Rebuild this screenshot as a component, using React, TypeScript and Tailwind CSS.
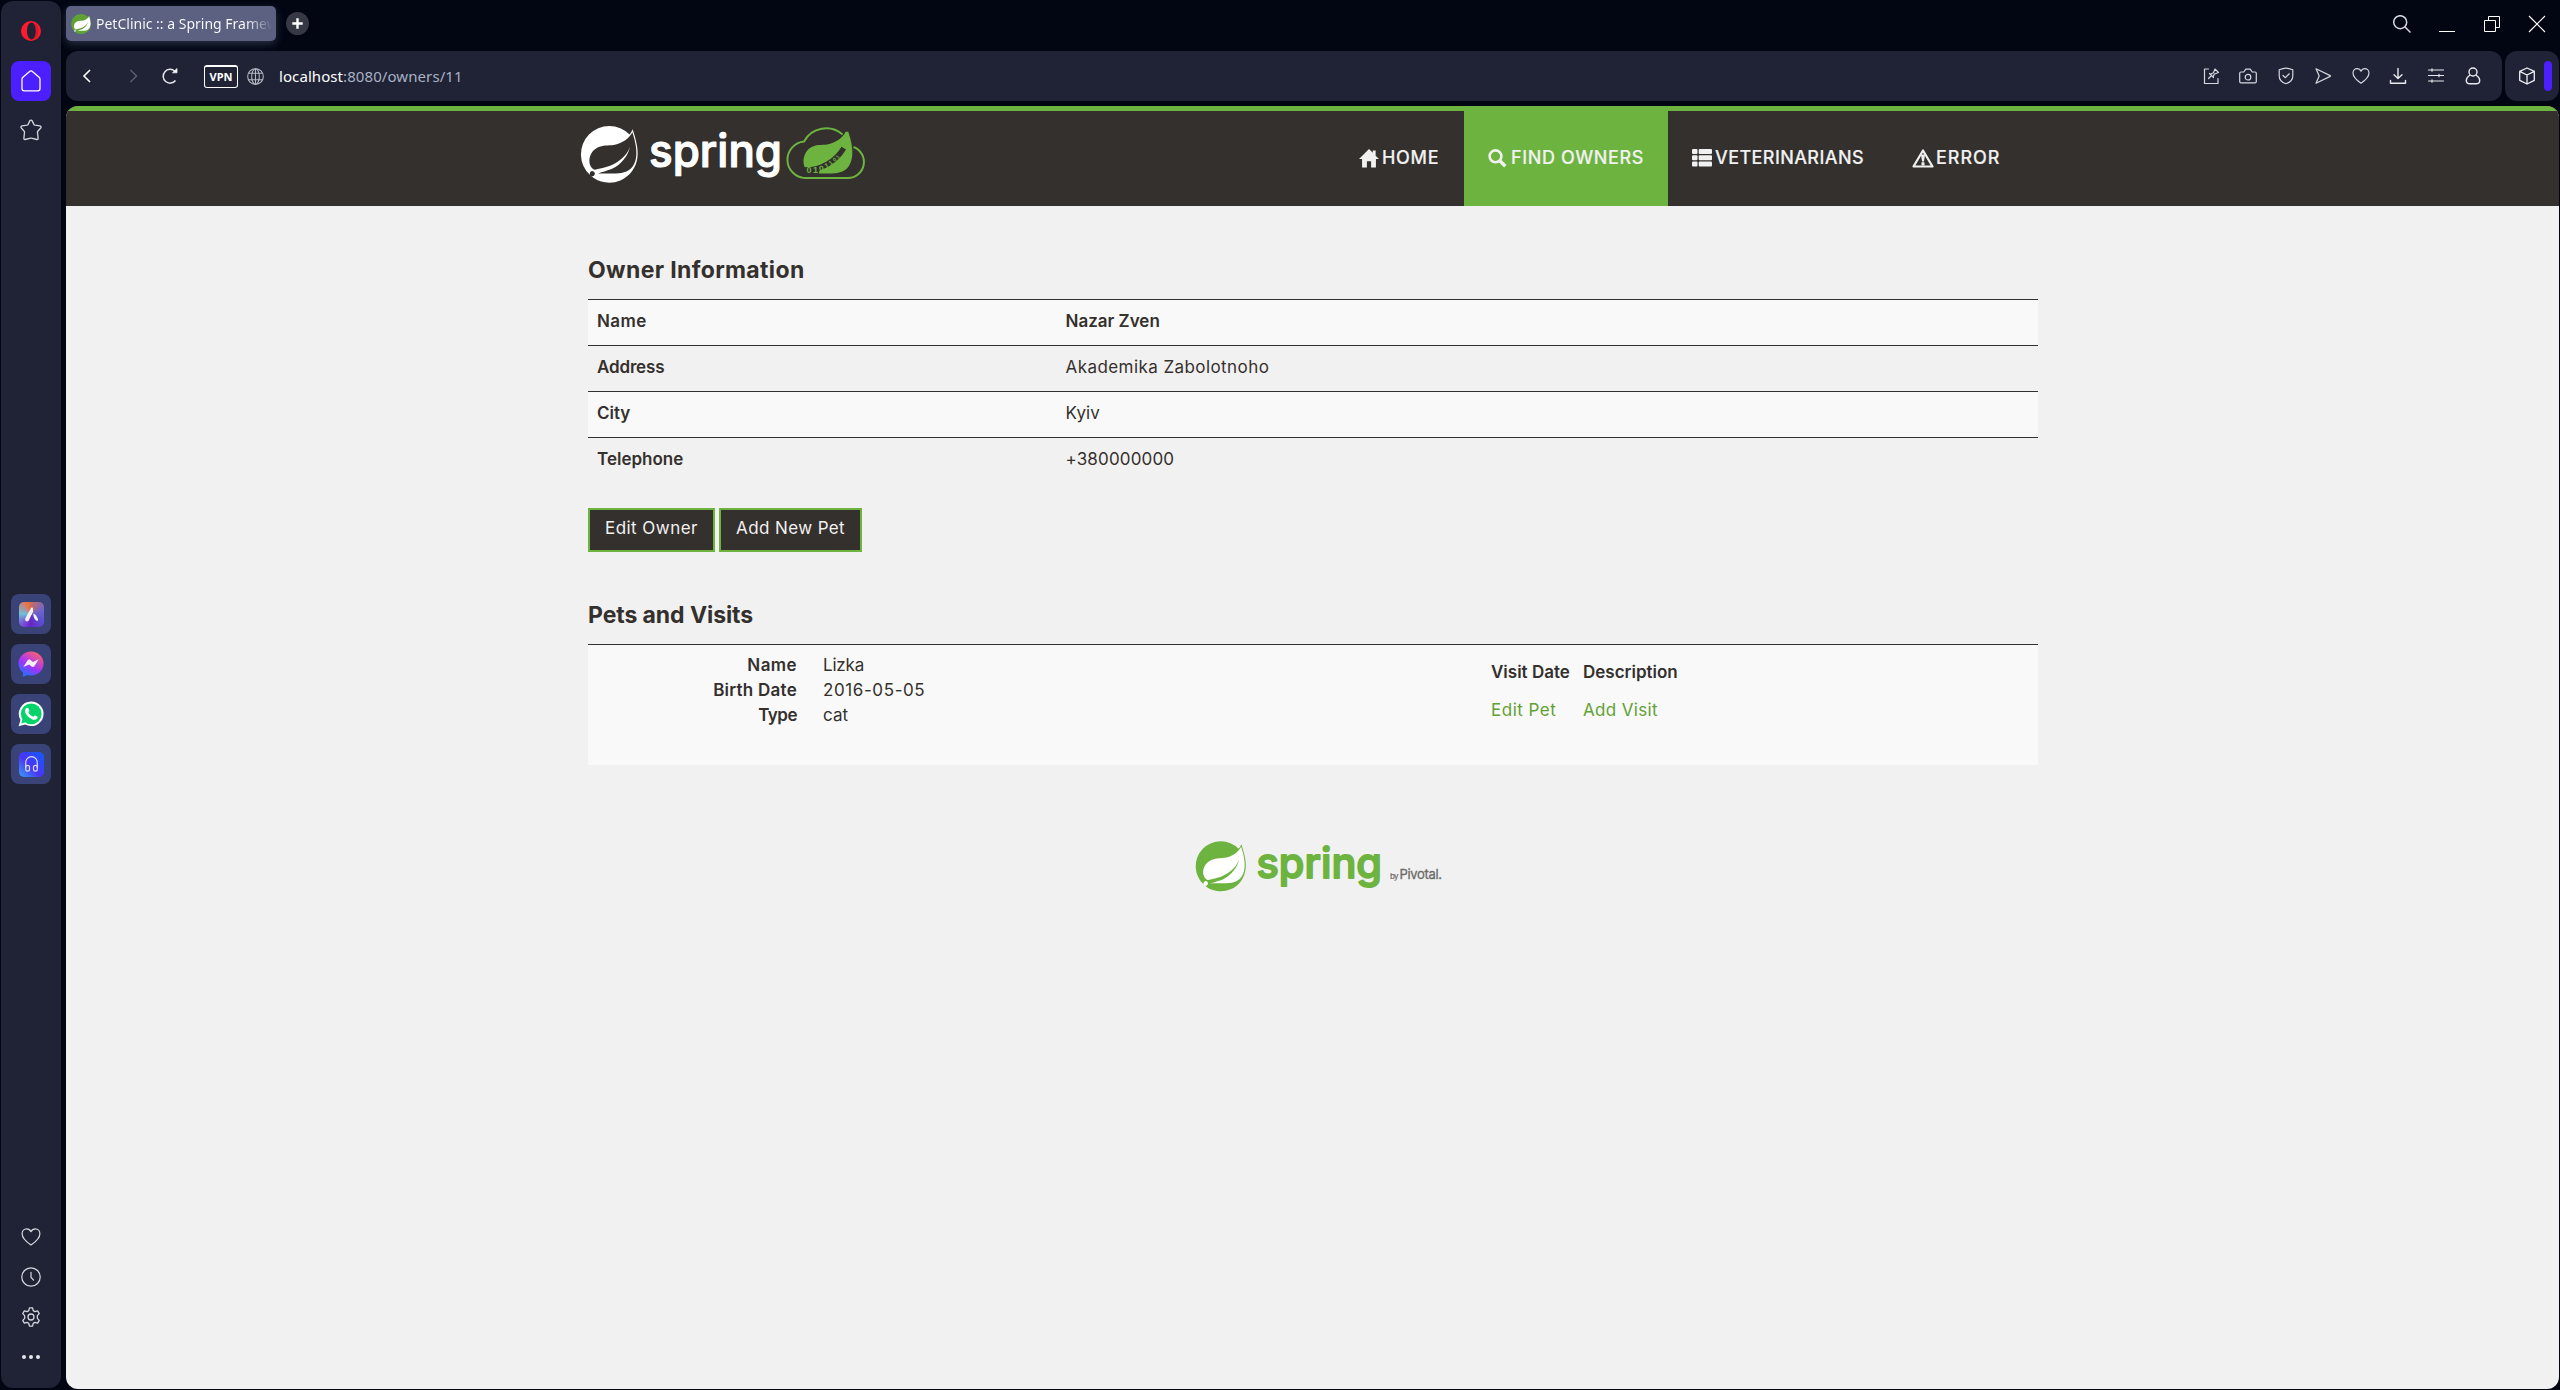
import type { ReactNode } from "react";

const LEAF =
  "M21.7796 17.2939c-2.9385 3.9263-9.2601 2.5928-13.2852 2.7904 0 0-.7161.0494-1.4323.1481 0 0 .2717-.1234.6174-.2469 2.8398-.9877 4.1732-1.1853 5.9018-2.0743 3.2349-1.6545 6.4698-5.2844 7.1118-9.0379-1.2347 3.6053-4.9881 6.7167-8.3959 7.9761-2.3459.8643-6.5685 1.7039-6.5685 1.7039l-.1729-.0988c-2.8645-1.4076-2.9632-7.6304 2.2718-9.6306 2.2966-.889 4.4696-.395 6.9637-.9877 2.6422-.6174 5.7045-2.5929 6.939-5.1857 1.3828 4.1732 3.062 10.643.0493 14.6434z";
const DISC =
  "M21.8537 1.4158a10.4504 10.4504 0 0 1-1.284 2.2471A11.9666 11.9666 0 1 0 3.8518 20.7757l.4445.3951a11.9543 11.9543 0 0 0 19.6316-8.2971c.3457-3.0126-.568-6.8649-2.0742-11.458zM5.5805 20.8745a1.0174 1.0174 0 1 1-.1482-1.4323 1.0396 1.0396 0 0 1 .1482 1.4323z";

function SpringMark({ disc, leaf }: { disc: string; leaf: string }) {
  return (
    <>
      <path d={DISC} fill={disc} />
      <path d={LEAF} fill={leaf} />
      <circle cx="4.8" cy="20.2" r="1.02" fill={leaf} />
    </>
  );
}

function HeaderLogo() {
  return (
    <svg className="mt-[9px] h-[66px] w-[290px] shrink-0 overflow-visible" viewBox="0 0 290 66">
      <g transform="translate(.9 5.9) scale(2.367)">
        <SpringMark disc="#fff" leaf="#34302d" />
      </g>
      <text
        x="69"
        y="46.5"
        textLength="133"
        lengthAdjust="spacingAndGlyphs"
        className="font-['Inter'] text-[45px] font-medium"
        fill="#fff"
        stroke="#fff"
        strokeWidth="1.2"
        strokeLinejoin="round"
      >
        spring
      </text>
      <path
        d="M262.5 14.5A25 25 0 0 0 224 21.5A18.3 18.3 0 0 0 225 58H268A16 16 0 0 0 273.5 27"
        fill="none"
        stroke="#6db33f"
        strokeWidth="2"
      />
      <g transform="translate(216.9 5.9) scale(2.367)">
        <path
          d="M21.7796 17.2939c-2.9385 3.9263-9.2601 2.5928-13.2852 2.7904L5 20C1 16 3 10 6.7 8.6682c2.2966-.889 4.4696-.395 6.9637-.9877 2.6422-.6174 5.7045-2.5929 6.939-5.1857l1.1 0c1.3828 4.1732 3.062 10.643.0769 14.7991z"
          fill="#6db33f"
        />
        <path d="M2.6 18.2C10 17.6 16.5 15 20.4 8.4" fill="none" stroke="#34302d" strokeWidth="2.2" transform="translate(-.6 1)" />
        <path d="M3 17.5L10 17.2L9 21.4L2.5 21.6z" fill="#34302d" />
      </g>
      <g className="font-['Liberation_Sans'] font-bold" fill="#6db33f">
        <text x="226.5" y="53" fontSize="9">0</text>
        <text x="233" y="52.5" fontSize="9">1</text>
        <text x="239.5" y="52" fontSize="8.5" transform="rotate(-12 240 51)">0</text>
        <text x="246" y="49" fontSize="7.5" transform="rotate(-25 246 49)">1</text>
        <text x="250.5" y="46" fontSize="6.5" transform="rotate(-35 250 46)">1</text>
        <text x="254.5" y="42.5" fontSize="5.5" transform="rotate(-42 254 42)">0</text>
        <text x="258" y="39" fontSize="5" transform="rotate(-48 258 39)">1</text>
      </g>
    </svg>
  );
}

function FooterLogo() {
  return (
    <svg className="h-[56px] w-[252px] overflow-visible" viewBox="0 0 252 56">
      <g transform="translate(.7 3.2) scale(2.09)">
        <SpringMark disc="#6db33f" leaf="#fff" />
      </g>
      <text
        x="61.5"
        y="40"
        textLength="125.5"
        lengthAdjust="spacingAndGlyphs"
        className="font-['Inter'] text-[42px] font-medium"
        fill="#6db33f"
        stroke="#6db33f"
        strokeWidth="1.8"
        strokeLinejoin="round"
      >
        spring
      </text>
      <text x="195" y="41" textLength="8.5" className="font-['Inter'] text-[8px]" fill="#6c6a68" stroke="#6c6a68" strokeWidth=".2">
        by
      </text>
      <text x="204.5" y="41" textLength="42.5" className="font-['Inter'] text-[13px]" fill="#6c6a68" stroke="#6c6a68" strokeWidth=".3">
        Pivotal.
      </text>
    </svg>
  );
}

function Line({ children, size = 18, w = 1.2, color = "#d5d7df" }: { children: ReactNode; size?: number; w?: number; color?: string }) {
  return (
    <svg width={size} height={size} viewBox="0 0 18 18" fill="none" stroke={color} strokeWidth={w} strokeLinecap="round" strokeLinejoin="round">
      {children}
    </svg>
  );
}

const HEART = "M9 16.2C5.5 13.8 1 10.2 1 6C1 3.4 2.9 1.6 5.1 1.6C6.9 1.6 8.3 2.6 9 4.2C9.7 2.6 11.1 1.6 12.9 1.6C15.1 1.6 17 3.4 17 6C17 10.2 12.5 13.8 9 16.2z";

function Sidebar() {
  const tile = "flex h-10 w-10 items-center justify-center rounded-lg bg-[#3a4377]";
  const small = "flex h-10 items-center justify-center pr-px";
  return (
    <aside className="ml-px mt-px flex h-[1387px] w-[60px] shrink-0 flex-col items-center rounded-xl bg-[#1f2335]">
      <div className="flex h-[60px] items-center">
        <svg width="20" height="20" viewBox="0 0 20 20">
          <path fillRule="evenodd" fill="#ff1b2d" d="M10 0a10 10 0 1 0 0 20a10 10 0 1 0 0-20zM10.500 1.500c2.600 0 4.300 3.800 4.300 8.500s-1.700 8.500-4.300 8.500s-4.500-3.800-4.500-8.500s1.900-8.500 4.500-8.500z" />
          <path fill="#b5121f" d="M11 1.500C14 2 15 6 15 10s-1 8-4 8.500C15 19 17.500 15 17.500 10S15 1 11 1.500z" opacity=".45" />
        </svg>
      </div>
      <div className="flex h-10 w-10 items-center justify-center rounded-lg bg-[#4b1fff]">
        <svg width="20" height="22" viewBox="0 0 20 22" fill="none" stroke="#fff" strokeWidth="1.3" strokeLinejoin="round">
          <path d="M1 9.200C1 8.400 1.300 7.700 1.900 7.200L8.300 1.700C9.300 .8 10.700 .8 11.700 1.700L18.100 7.200C18.700 7.700 19 8.400 19 9.200V18.500A2.300 2.300 0 0 1 16.700 20.800H3.300A2.300 2.300 0 0 1 1 18.500z" />
        </svg>
      </div>
      <div className="flex h-[58px] items-center pr-px">
        <svg width="22" height="22" viewBox="0 0 22 22" fill="none" stroke="#d5d7df" strokeWidth="1.300" strokeLinejoin="round">
          <path d="M9.800 1.900C10.300 .9 11.700 .9 12.200 1.900L14 5.600C14.200 5.900 14.500 6.100 14.900 6.200L20 6.900C21 7.100 21.400 8.200 20.700 9L17.800 12.200C17.500 12.500 17.400 12.900 17.500 13.300L18.100 19.300C18.200 20.200 17.600 20.700 16.800 20.500L11.500 19.200C11.200 19.100 10.800 19.100 10.500 19.200L5.200 20.500C4.400 20.700 3.800 20.200 3.900 19.300L4.500 13.300C4.600 12.900 4.500 12.500 4.200 12.200L1.300 9C.6 8.200 1 7.100 2 6.900L7.100 6.200C7.500 6.100 7.800 5.900 8 5.600z" />
        </svg>
      </div>
      <div className="mt-[435px] flex flex-col gap-2.5">
        <div className={tile}>
          <div className="flex h-[25px] w-[25px] items-center justify-center rounded-[5px] bg-[conic-gradient(from_0deg_at_50%_50%,#c96a62,#7065c8_18%,#5a4fd0_35%,#6a22c8_52%,#7a5fd8_64%,#6fc0d8_76%,#b98a8a_88%,#f0713a_94%,#c96a62)]">
            <svg width="15" height="15" viewBox="0 0 15 15" fill="#f4f1f5">
              <path d="M7.200 .8C7.900 0 9 .5 9 1.500V5L4.800 13.300C4.300 14.600 2.500 14.800 1.700 13.800C.8 12.900 1 12 1.500 11z" />
              <path d="M9.400 6.800C10.300 7.200 11.200 7.500 12 8.300L14 12C14.500 13.300 13.500 14.200 12.500 13.700C10.500 12.800 9.300 9.800 9.400 6.800z" />
            </svg>
          </div>
        </div>
        <div className={tile}>
          <svg width="26" height="26" viewBox="0 0 26 26">
            <defs>
              <linearGradient id="msg" x1=".15" y1="1" x2=".75" y2="0">
                <stop offset="0" stopColor="#0a7cff" />
                <stop offset=".45" stopColor="#a033ff" />
                <stop offset="1" stopColor="#ff6070" />
              </linearGradient>
            </defs>
            <path d="M13 .5C20 .5 25.500 5.600 25.500 12.500S20 24.500 13 24.500c-1.200 0-2.400-.2-3.500-.5L5 25.700V21.500C2.200 19.300 .5 16.200 .5 12.500C.5 5.600 6 .5 13 .5z" fill="url(#msg)" />
            <path d="M5.300 16L9.500 9.400C10.200 8.400 11.500 8.200 12.400 8.900L15 11L20.700 8.300L16.500 15C15.800 16 14.500 16.300 13.600 15.600L11 13.500z" fill="#f4f0fa" />
          </svg>
        </div>
        <div className={tile}>
          <svg width="26" height="26" viewBox="0 0 26 26">
            <path d="M13.200 .5a12.300 12.300 0 1 1-6 23L.6 25.300L2.500 19A12.300 12.300 0 0 1 13.200 .5z" fill="#fff" />
            <circle cx="13.200" cy="12.800" r="10.400" fill="#06d46a" />
            <path d="M3.300 22.600L4.400 18L8 21.300z" fill="#06d46a" />
            <path d="M8.800 6.800C9.600 6.500 10.100 6.700 10.400 7.300L11.300 9.500C11.500 10.100 10.700 10.900 10.400 11.300C11.500 13.500 13 14.800 15.200 15.700C15.800 15.300 16.300 14.200 17 14.400L19.300 15.500C19.900 15.900 19.500 17.300 19 17.800C17.700 19.100 15.900 19 14.400 18.400C11.400 17.300 9.200 15.200 7.600 12.300C6.500 10.100 7 7.800 8.800 6.800z" fill="#fff" />
          </svg>
        </div>
        <div className={tile}>
          <div className="flex h-[25px] w-[25px] items-center justify-center rounded-[5px] bg-[linear-gradient(45deg,#3aa0f5,#4a35f5_45%,#0f5cff)]">
            <svg width="13" height="16" viewBox="0 0 13 16" fill="none" stroke="#dcd8fb" strokeWidth="1.200">
              <path d="M.7 12V6.500a5.800 5.800 0 0 1 11.600 0V12" />
              <rect x=".7" y="9.300" width="3.800" height="5.800" rx="1.900" />
              <rect x="8.500" y="9.300" width="3.800" height="5.800" rx="1.900" />
            </svg>
          </div>
        </div>
      </div>
      <div className="mt-[433px] flex flex-col">
        <div className={small}>
          <Line size={20} w={1.1}><path d={HEART} /></Line>
        </div>
        <div className={small}>
          <Line size={20} w={1.1}><circle cx="9" cy="9" r="8.300" /><path d="M9 4.800V9.200L11.300 11.800" /></Line>
        </div>
        <div className={small}>
          <Line size={20} w={1.150}>
            <path d="M7.600 .8H10.400L11 3.300L12.500 4.200L15 3.500L16.400 5.900L14.700 7.800V10.200L16.400 12.100L15 14.500L12.500 13.800L11 14.700L10.400 17.200H7.600L7 14.700L5.500 13.800L3 14.500L1.600 12.100L3.300 10.200V7.800L1.600 5.900L3 3.500L5.500 4.200L7 3.300z" />
            <circle cx="9" cy="9" r="2.700" />
          </Line>
        </div>
        <div className={small}>
          <svg width="18" height="4" viewBox="0 0 18 4" fill="#e4e5ea">
            <circle cx="2" cy="2" r="2" /><circle cx="9" cy="2" r="2" /><circle cx="16" cy="2" r="2" />
          </svg>
        </div>
      </div>
    </aside>
  );
}

function TabBar() {
  const cell = "flex w-[45px] justify-center";
  return (
    <div className="flex h-[51px] items-start">
      <div className="mt-1.5 flex h-[35px] w-[210px] items-center overflow-hidden rounded-[5px] bg-[#5c6182] pl-[5px] shadow-[0_3px_8px_rgba(92,97,130,0.45)]">
        <svg width="20" height="20" viewBox="0 0 24 24" className="shrink-0">
          <SpringMark disc="#5fa134" leaf="#fff" />
        </svg>
        <span className="ml-[5px] mr-1 flex-1 overflow-hidden whitespace-nowrap bg-[linear-gradient(to_right,#fff_85%,#5c6182)] bg-clip-text font-['Noto_Sans',sans-serif] text-[14px] text-transparent">
          PetClinic :: a Spring Framew
        </span>
      </div>
      <div className="ml-2.5 mt-3 flex h-[23px] w-[23px] items-center justify-center rounded-full bg-[#363843]">
        <svg width="11" height="11" viewBox="0 0 11 11" stroke="#fff" strokeWidth="2.400"><path d="M5.500 .3V10.700M.3 5.500H10.700" /></svg>
      </div>
      <div className="ml-auto mt-[15px] flex h-[18px] items-center pr-px">
        <span className={cell}>
          <svg width="18" height="18" viewBox="0 0 18 18" fill="none" stroke="#d5d7df" strokeWidth="1.500"><circle cx="7.200" cy="7.200" r="6.500" /><path d="M11.800 11.800L17.500 17.500" /></svg>
        </span>
        <span className={cell}>
          <svg width="16" height="18" viewBox="0 0 16 18" stroke="#fff"><path d="M0 16.500H16" /></svg>
        </span>
        <span className={cell}>
          <svg width="16" height="18" viewBox="0 0 16 18" fill="none" stroke="#fff"><path d="M.5 5.500H11.500V16.500H.5z M4.500 5V1.500H15.500V12.500H12" /></svg>
        </span>
        <span className={cell}>
          <svg width="18" height="18" viewBox="0 0 18 18" stroke="#fff" strokeWidth="1.200"><path d="M1 1L17 17M17 1L1 17" /></svg>
        </span>
      </div>
    </div>
  );
}

function AddressBar() {
  const cell = "flex w-[37.5px] justify-center";
  return (
    <div className="flex h-[50px] gap-[3px]">
      <div className="flex flex-1 items-center rounded-xl bg-[#1f2335] pl-4 pr-[10px]">
        <svg width="10" height="14" viewBox="0 0 10 14" fill="none" stroke="#fff" strokeWidth="1.600"><path d="M8 1L2 7L8 13" /></svg>
        <svg className="ml-[37px]" width="10" height="14" viewBox="0 0 10 14" fill="none" stroke="#5a5d6c" strokeWidth="1.500"><path d="M1.500 1L7.500 7L1.500 13" /></svg>
        <svg className="ml-[22px]" width="18" height="18" viewBox="0 0 18 18" fill="none" stroke="#e6e7ec" strokeWidth="1.500">
          <path d="M14.500 13.500A6.900 6.900 0 1 1 13.800 4.200" /><path d="M11.500 5.800H16V1.500z" fill="#fff" strokeWidth=".8" />
        </svg>
        <div className="ml-[25px] flex h-[23px] w-[34px] items-center justify-center rounded-[3px] border border-t-2 border-white font-['Noto_Sans',sans-serif] text-[11px] font-bold leading-none text-white">
          VPN
        </div>
        <svg className="ml-[9px]" width="17" height="17" viewBox="0 0 17 17" fill="none" stroke="#b5b8c4" strokeWidth="1.100">
          <circle cx="8.500" cy="8.500" r="7.800" /><ellipse cx="8.500" cy="8.500" rx="3.800" ry="7.800" /><path d="M1.700 5.200H15.300M1.700 11.800H15.300M8.500 .7V16.300" />
        </svg>
        <span className="ml-[15px] font-['Noto_Sans',sans-serif] text-[15px] tracking-[0.08px] text-[#a9b0c4]">
          <span className="text-white">localhost</span>:8080/owners/11
        </span>
        <div className="ml-auto flex items-center">
          <span className={cell}>
            <Line><path d="M6.500 2H2.500V16.500H16V11.500" /><path d="M6.500 11.500L9 9M7.500 6.500L11.500 10.500M8.500 7.300L11.500 5.800L13 2L16.500 5.500L12.500 7L11 9.800" /></Line>
          </span>
          <span className={cell}>
            <Line><path d="M2 5H4.800L6.800 2.200H11.200L13.200 5H16A1.300 1.300 0 0 1 17.300 6.300V14.500A1.300 1.300 0 0 1 16 15.800H2A1.300 1.300 0 0 1 .7 14.500V6.300A1.300 1.300 0 0 1 2 5z" /><circle cx="9" cy="10.200" r="2.800" /></Line>
          </span>
          <span className={cell}>
            <Line><path d="M9 1.200C11.500 1.200 13.500 1.900 15.800 2.800V9C15.800 12.500 12.800 15.500 9 16.700C5.200 15.500 2.200 12.500 2.200 9V2.800C4.500 1.900 6.500 1.200 9 1.200z" /><path d="M6 8.500L8.200 10.700L12.300 6.800" /></Line>
          </span>
          <span className={cell}>
            <Line><path d="M2 1.800L16.200 8.600C16.600 8.800 16.600 9.200 16.200 9.400L2 16.200L5.200 9z" /></Line>
          </span>
          <span className={cell}>
            <Line><path d={HEART} /></Line>
          </span>
          <span className={cell}>
            <Line w={1.400} color="#e8e9ee"><path d="M9 1.500V11M5 7.800L9 11.500L13 7.800M1.500 13.500V16.300H16.500V13.500" /></Line>
          </span>
          <span className={cell}>
            <Line w={1.200} color="#e8e9ee"><path d="M1.500 3H16.500M1.500 8.500H16.500M1.500 14H16.500M5 1.800V4.200M12 7.300V9.700M5 12.800V15.200" /></Line>
          </span>
          <span className={cell}>
            <Line w={1.400} color="#e8e9ee"><circle cx="9" cy="5" r="4" /><path d="M5.500 8.500C3.500 9.700 2.300 11.500 2.300 13.500C2.300 15.700 3.800 16.800 6 16.800H12C14.200 16.800 15.700 15.700 15.700 13.500C15.700 11.500 14.500 9.700 12.500 8.500" /></Line>
          </span>
        </div>
      </div>
      <div className="mr-px flex w-[54px] items-center rounded-xl bg-[#1f2335] pl-[13px]">
        <Line w={1.300} color="#f0f0f4"><path d="M9 1L16.300 4.300V13.300L9 17L1.700 13.300V4.300zM1.700 4.300L9 8L16.300 4.300M9 8V17" /></Line>
        <div className="ml-2 h-[30px] w-2 rounded-full bg-[#4b1fff]" />
      </div>
    </div>
  );
}

function Nav() {
  const item = "flex h-[95px] items-center pl-6 pb-[1px] text-[18px] font-medium leading-none text-[#f1f1f1]";
  return (
    <nav className="flex font-['Inter',sans-serif]">
      <a className={item + " w-[129px]"}>
        <svg width="20" height="19" viewBox="0 0 21 20" fill="#f1f1f1"><path d="M10.500 0L14.500 4V1.500H17.500V7L21 10.600H17.800V19.500H12.700V13H8.300V19.500H3.200V10.600H0z" /></svg>
        <span className="ml-[3px] tracking-[0.7px] [-webkit-text-stroke:0.15px]">HOME</span>
      </a>
      <a className={item + " w-[204px] bg-[#6db33f]"}>
        <svg width="19" height="19" viewBox="0 0 19 19" fill="none" stroke="#f1f1f1"><circle cx="7.500" cy="7.300" r="5.900" strokeWidth="2.600" /><path d="M11.800 11.800L17.300 17.300" strokeWidth="3.400" /></svg>
        <span className="ml-1 tracking-[0.6px] [-webkit-text-stroke:0.15px]">FIND OWNERS</span>
      </a>
      <a className={item + " w-[220px]"}>
        <svg width="20" height="18" viewBox="0 0 20 18" fill="#f1f1f1">
          <rect width="5.500" height="5" rx="1" /><rect x="6.700" width="13.300" height="5" rx="1" />
          <rect y="6.300" width="5.500" height="5" rx="1" /><rect x="6.700" y="6.300" width="13.300" height="5" rx="1" />
          <rect y="12.600" width="5.500" height="5" rx="1" /><rect x="6.700" y="12.600" width="13.300" height="5" rx="1" />
        </svg>
        <span className="ml-[3px] tracking-[0.4px] [-webkit-text-stroke:0.15px]">VETERINARIANS</span>
      </a>
      <a className={item + " w-[137px]"}>
        <svg width="22" height="19" viewBox="0 0 22 19">
          <path d="M11 1.500L20.500 17.500H1.500z" fill="none" stroke="#f1f1f1" strokeWidth="2.200" strokeLinejoin="round" />
          <path d="M9 5.500H13L12 12.500H10z M9.500 13.300H12.500V16.500H9.500z" fill="#f1f1f1" />
        </svg>
        <span className="ml-[2px] tracking-[0.95px] [-webkit-text-stroke:0.15px]">ERROR</span>
      </a>
    </nav>
  );
}

const heading = "text-[23px] font-bold leading-[26px]";
const button = "block h-11 border-2 border-[#6db33f] bg-[#34302d] pl-[15px] pt-[5px] leading-[26px] text-[#f1f1f1]";

const ownerRows = [
  { label: "Name", labelClass: "tracking-[0.4px]", value: "Nazar Zven", valueClass: "font-semibold" },
  { label: "Address", labelClass: "tracking-[-0.15px]", value: "Akademika Zabolotnoho", valueClass: "tracking-[0.43px]" },
  { label: "City", labelClass: "", value: "Kyiv", valueClass: "tracking-[0.15px]" },
  { label: "Telephone", labelClass: "", value: "+380000000", valueClass: "tracking-[0.15px]" },
];

const petRows = [
  { label: "Name", labelClass: "tracking-[0.4px]", value: "Lizka", valueClass: "tracking-[-0.2px]" },
  { label: "Birth Date", labelClass: "tracking-[0.25px]", value: "2016-05-05", valueClass: "tracking-[0.6px]" },
  { label: "Type", labelClass: "tracking-[-0.5px]", value: "cat", valueClass: "" },
];

export default function App() {
  return (
    <div className="flex h-[1390px] w-[2560px] overflow-hidden bg-[#020613]">
      <Sidebar />
      <div className="ml-[5px] flex flex-1 flex-col">
        <TabBar />
        <AddressBar />
        <main className="mr-px mt-[5px] h-[1283px] overflow-hidden rounded-xl bg-[#f1f1f1] font-['Inter',sans-serif] text-[17px] text-[#34302d]">
          <header className="flex h-[100px] border-t-[5px] border-[#6db33f] bg-[#34302d] pl-[514px]">
            <HeaderLogo />
            <div className="ml-[465px]">
              <Nav />
            </div>
          </header>
          <div className="ml-[522px] flex w-[1450px] flex-col pt-[51px]">
            <h2 className={heading + " mb-4 tracking-[0.35px]"}>Owner Information</h2>
            <table className="w-full border-separate border-spacing-0">
              <tbody>
                {ownerRows.map((row) => (
                  <tr key={row.label} className="h-[46px] odd:bg-[#f9f9f9]">
                    <th className={"w-[468px] border-t border-[#34302d] pl-[9px] pt-2 text-left align-top font-semibold leading-[26px] " + row.labelClass}>
                      {row.label}
                    </th>
                    <td className={"border-t border-[#34302d] pl-[9.5px] pt-2 align-top leading-[26px] " + row.valueClass}>{row.value}</td>
                  </tr>
                ))}
              </tbody>
            </table>
            <div className="mt-[25px] flex gap-1">
              <a className={button + " w-[127px] tracking-[0.45px]"}>Edit Owner</a>
              <a className={button + " w-[143px] tracking-[0.4px]"}>Add New Pet</a>
            </div>
            <h2 className={heading + " mb-4 mt-[50px] tracking-[-0.08px]"}>Pets and Visits</h2>
            <section className="flex h-[121px] border-t border-[#34302d] bg-[#f9f9f9]">
              <dl className="w-[903px] pt-2">
                {petRows.map((row) => (
                  <div key={row.label} className="flex gap-[26px] leading-[25px]">
                    <dt className={"w-[209px] text-right font-semibold " + row.labelClass}>{row.label}</dt>
                    <dd className={row.valueClass}>{row.value}</dd>
                  </div>
                ))}
              </dl>
              <div className="grid h-fit grid-cols-[92px_auto] gap-y-3 pt-3.5 leading-[26px]">
                <b className="font-semibold">Visit Date</b>
                <b className="font-semibold">Description</b>
                <a className="tracking-[0.5px] text-[#5fa134]">Edit Pet</a>
                <a className="tracking-[0.35px] text-[#5fa134]">Add Visit</a>
              </div>
            </section>
            <footer className="ml-[607px] mt-[73px]">
              <FooterLogo />
            </footer>
          </div>
        </main>
      </div>
    </div>
  );
}
